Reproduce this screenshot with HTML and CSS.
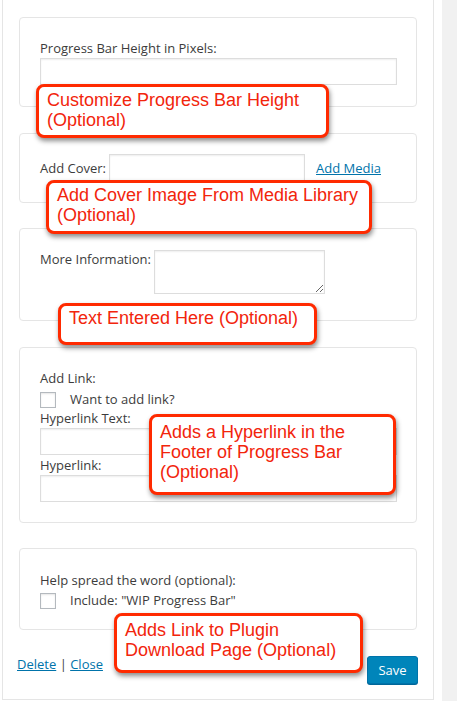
FILE: index.html
```html
<!DOCTYPE html>
<html>
<head>
<meta charset="utf-8">
<link rel="stylesheet" href="styles.css">
</head>
<body>
<div class="page">
  <div class="panel">
    <div class="card card-height">
      <label class="field-label">Progress Bar Height in Pixels:</label>
      <input type="text" class="text-input full">
    </div>

    <div class="card card-cover">
      <div class="row">
        <label class="inline-label">Add Cover:</label>
        <input type="text" class="text-input cover-input">
        <a href="#" class="link">Add Media</a>
      </div>
    </div>

    <div class="card card-info">
      <div class="row top">
        <label class="inline-label">More Information:</label>
        <textarea class="textarea"></textarea>
      </div>
    </div>

    <div class="card card-link">
      <label class="field-label">Add Link:</label>
      <div class="check-row">
        <span class="checkbox"></span>
        <span>Want to add link?</span>
      </div>
      <label class="field-label">Hyperlink Text:</label>
      <input type="text" class="text-input full">
      <label class="field-label gap-top">Hyperlink:</label>
      <input type="text" class="text-input full">
    </div>

    <div class="card card-spread">
      <label class="field-label">Help spread the word (optional):</label>
      <div class="check-row">
        <span class="checkbox"></span>
        <span>Include: "WIP Progress Bar"</span>
      </div>
    </div>

    <div class="footer">
      <div class="footer-links"><a href="#" class="link">Delete</a> | <a href="#" class="link">Close</a></div>
      <button class="save">Save</button>
    </div>
  </div>
  <div class="sidebar"></div>

  <div class="note note-1">Customize Progress Bar Height<br>(Optional)</div>
  <div class="note note-2">Add Cover Image From Media Library<br>(Optional)</div>
  <div class="note note-3">Text Entered Here (Optional)</div>
  <div class="note note-4">Adds a Hyperlink in the<br>Footer of Progress Bar<br>(Optional)</div>
  <div class="note note-5">Adds Link to Plugin<br>Download Page (Optional)</div>
</div>
</body>
</html>
```

FILE: styles.css
```css
* { box-sizing: border-box; }

html, body {
  margin: 0;
  padding: 0;
  background: #ffffff;
}

body {
  font-family: "Open Sans", "Liberation Sans", sans-serif;
  font-size: 13px;
  line-height: 18px;
  color: #3c3c3c;
}

.page {
  position: relative;
  display: flex;
  width: 457px;
  height: 701px;
  overflow: hidden;
}

.panel {
  margin-left: 2px;
  width: 432px;
  height: 700px;
  border: 1px solid #e5e5e5;
  border-top: none;
  padding: 17px 16px 0 16px;
  display: flex;
  flex-direction: column;
}

.sidebar {
  margin-left: 8px;
  width: 15px;
  height: 701px;
  background: #f1f1f1;
}

.card {
  border: 1px solid #e5e5e5;
  border-radius: 4px;
  padding: 21px 20px 20px 20px;
  margin-bottom: 26px;
  display: flex;
  flex-direction: column;
}

.card-height { height: 90px; }
.card-cover { height: 70px; padding-top: 20px; margin-bottom: 25px; }
.card-info { height: 93px; }
.card-link { height: 176px; margin-bottom: 25px; }
.card-spread { height: 82px; padding-top: 22px; margin-bottom: 26px; }

.field-label {
  display: block;
  line-height: 18px;
  margin-bottom: 1px;
}

.gap-top { margin-top: 1px; }

.text-input {
  display: block;
  height: 27px;
  border: 1px solid #dddddd;
  box-shadow: inset 0 1px 2px rgba(0, 0, 0, 0.07);
  background: #ffffff;
  margin: 0;
  padding: 0 4px;
  font: inherit;
}

.full { width: 357px; }

.row {
  display: flex;
  align-items: center;
}

.row.top { align-items: flex-start; }

.inline-label { line-height: 18px; }

.cover-input {
  width: 196px;
  height: 28px;
  margin-left: 3px;
  margin-right: 11px;
}

.textarea {
  display: block;
  width: 171px;
  height: 44px;
  margin: 0 0 0 3px;
  border: 1px solid #dddddd;
  box-shadow: inset 0 1px 2px rgba(0, 0, 0, 0.07);
  background: #ffffff;
  font: inherit;
  padding: 2px 4px;
}

.check-row {
  display: flex;
  align-items: center;
  height: 21px;
  gap: 14px;
}

.checkbox {
  display: block;
  width: 16px;
  height: 16px;
  border: 1px solid #b4b9be;
  background: #ffffff;
  box-shadow: inset 0 1px 2px rgba(0, 0, 0, 0.1);
  margin-top: 3px;
}

.link {
  color: #0073aa;
  text-decoration: underline;
}

.footer {
  display: flex;
  justify-content: space-between;
  align-items: flex-start;
  margin-left: -2px;
  margin-right: -1px;
}

.footer-links {
  line-height: 18px;
  margin-top: -1px;
}

.save {
  height: 28px;
  width: 51px;
  padding: 0 10px;
  border: 1px solid #0073aa;
  border-radius: 3px;
  background: #0085ba;
  box-shadow: 0 1px 0 #006799;
  color: #ffffff;
  font: inherit;
  line-height: 26px;
}

.note {
  position: absolute;
  border: 3px solid #ff2a00;
  border-radius: 8px;
  background: #ffffff;
  color: #f2250c;
  font-family: "Liberation Sans", Arial, sans-serif;
  font-size: 18px;
  line-height: 20px;
  padding: 3px 8px;
  box-shadow: 1px 3px 5px rgba(0, 0, 0, 0.45);
  white-space: nowrap;
}

.note-1 { left: 36px; top: 84px; width: 293px; height: 54px; }
.note-2 { left: 46px; top: 180px; width: 326px; height: 54px; padding-top: 2px; }
.note-3 { left: 58px; top: 303px; width: 259px; height: 42px; padding-top: 2px; }
.note-4 { left: 149px; top: 414px; width: 247px; height: 81px; padding-top: 5px; }
.note-5 { left: 114px; top: 613px; width: 249px; height: 60px; padding-top: 4px; }
```
